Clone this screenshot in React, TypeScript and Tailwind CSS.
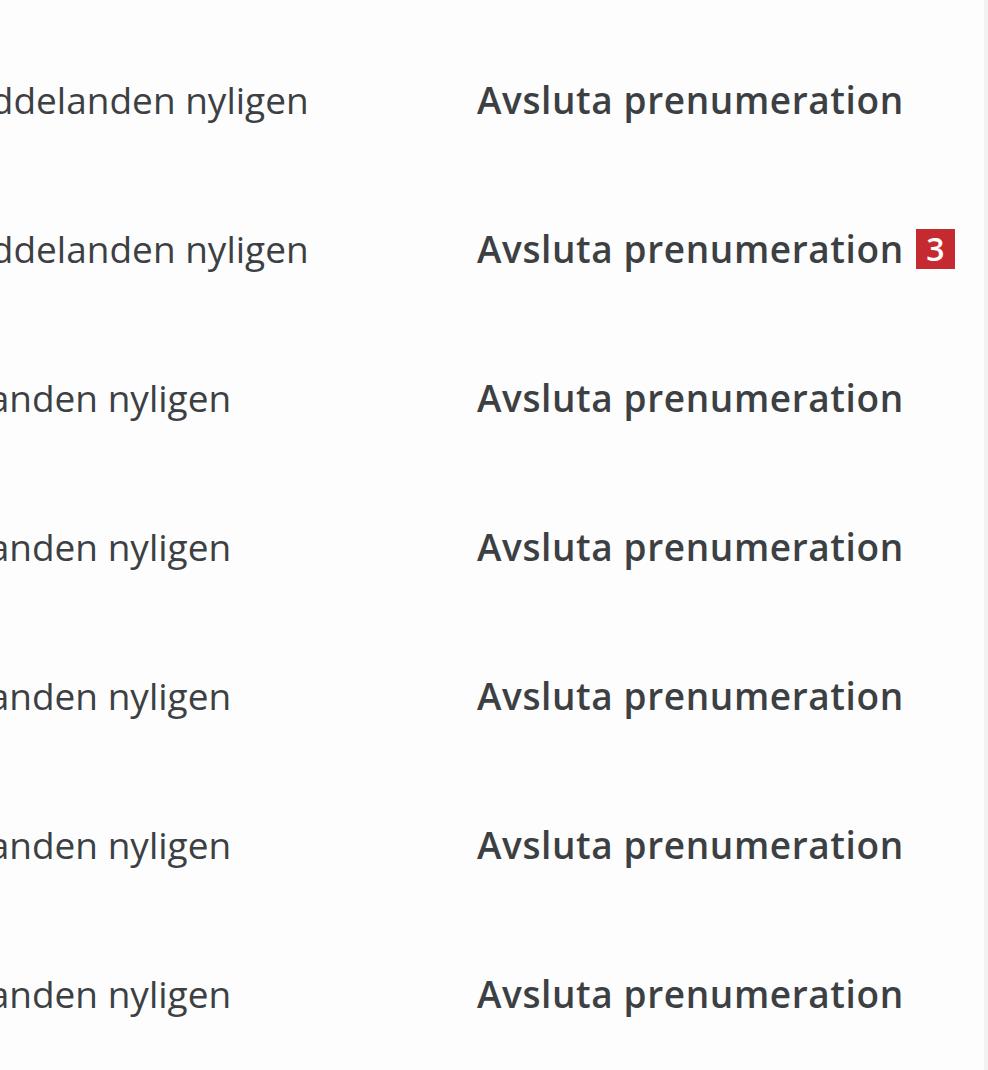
import React from "react";

interface Row {
  label: string;
  badge?: string;
}

const rows: Row[] = [
  { label: "Många meddelanden nyligen" },
  { label: "Många meddelanden nyligen", badge: "3" },
  { label: "Få meddelanden nyligen" },
  { label: "Få meddelanden nyligen" },
  { label: "Få meddelanden nyligen" },
  { label: "Få meddelanden nyligen" },
  { label: "Få meddelanden nyligen" },
];

const App = () => {
  return (
    <div className="flex h-[1070px] w-[988px] overflow-hidden bg-[#fdfdfd] font-['Open_Sans',sans-serif] text-[#3c4043]">
      <div className="flex-1 overflow-hidden">
        <div className="-ml-[191px] flex flex-col pt-[25px]">
          {rows.map((row, i) => (
            <div key={i} className="flex h-[149px] items-center">
              <div className="w-[668px] shrink-0 whitespace-nowrap text-[37px]">
                {row.label}
              </div>
              <div className="flex items-center gap-[12px]">
                <button className="whitespace-nowrap text-[37px] font-semibold tracking-[0.6px] text-[#3c4043]">
                  Avsluta prenumeration
                </button>
                {row.badge && (
                  <span className="flex h-[40px] w-[39px] items-center justify-center bg-[#c62a31] text-[32px] font-semibold leading-none text-white">
                    {row.badge}
                  </span>
                )}
              </div>
            </div>
          ))}
        </div>
      </div>
      <div className="w-[4px] shrink-0 bg-[#f2f2f2]" />
    </div>
  );
};

export default App;
